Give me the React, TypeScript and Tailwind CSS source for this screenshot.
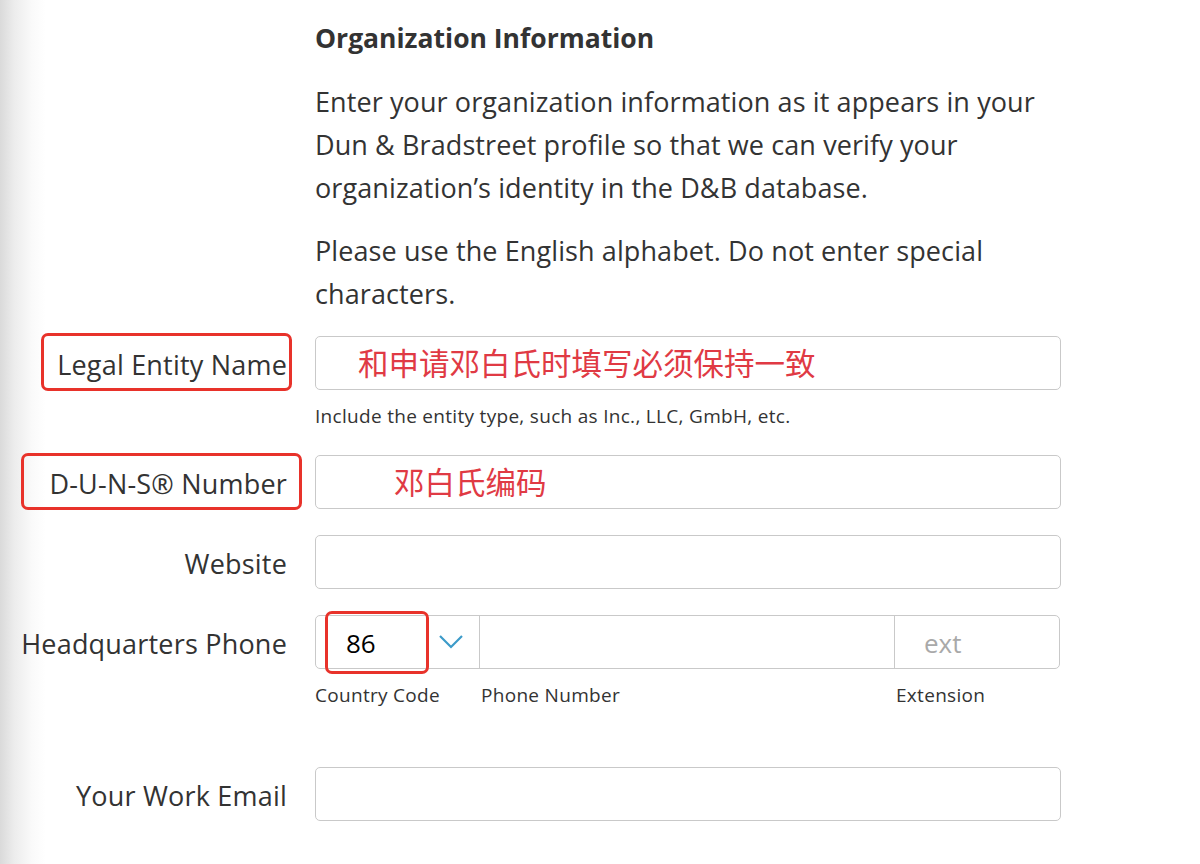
import React from 'react';

const font = { fontFamily: '"Open Sans", "Noto Sans CJK SC", sans-serif' };
const cjk = { fontFamily: '"Noto Sans CJK SC", sans-serif' };

const inputBox = 'h-[54px] w-[746px] rounded-[5px] border border-[#c9c9c9] bg-white';

const Row: React.FC<{ label: string; className?: string; children: React.ReactNode; mark?: React.ReactNode }> = ({ label, className, children, mark }) => (
    <div className={`relative flex items-center ${className || ''}`}>
        {mark}
        <div className="w-[287px] shrink-0 whitespace-nowrap pt-[3px] text-right text-[27px] leading-[30px] tracking-[0.2px] text-[#333]">{label}</div>
        <div className="ml-[28px]">{children}</div>
    </div>
);

export default function App() {
    return (
        <div
            style={font}
            className="min-h-[864px] w-[1200px] bg-[linear-gradient(to_right,#dadada_0px,#ececec_14px,#fafafa_32px,#ffffff_46px)] text-[#333]"
        >
            <div className="pl-[315px] pt-[17px] w-[1061px]">
                <h2 className="text-[26.5px] font-bold leading-[43px] text-[#333]">Organization Information</h2>
                <p className="mt-[20px] w-[740px] text-[27px] leading-[43px] tracking-[0.1px]">
                    Enter your organization information as it appears in your Dun &amp; Bradstreet profile so that we can verify your organization’s identity in the D&amp;B database.
                </p>
                <p className="mt-[20px] w-[740px] text-[27px] leading-[43px] tracking-[0.1px]">
                    Please use the English alphabet. Do not enter special characters.
                </p>
            </div>

            <Row
                label="Legal Entity Name"
                className="mt-[21px]"
                mark={<span className="pointer-events-none absolute left-[41px] top-[-3px] h-[58px] w-[251px] rounded-[7px] border-[3px] border-[#e8322a]" />}
            >
                <div style={cjk} className={`${inputBox} flex items-center pl-[42px] text-[30.5px] text-[#e03a44]`}>和申请邓白氏时填写必须保持一致</div>
            </Row>
            <div className="ml-[315px] mt-[13px] text-[19px] leading-[26px] tracking-[0.3px] text-[#333]">Include the entity type, such as Inc., LLC, GmbH, etc.</div>

            <Row
                label="D-U-N-S® Number"
                className="mt-[26px]"
                mark={<span className="pointer-events-none absolute left-[21px] top-[-2px] h-[57px] w-[281px] rounded-[7px] border-[3px] border-[#e8322a]" />}
            >
                <div style={cjk} className={`${inputBox} flex items-center pl-[78px] text-[30.5px] text-[#e03a44]`}>邓白氏编码</div>
            </Row>

            <Row label="Website" className="mt-[26px]">
                <div className={inputBox} />
            </Row>

            <Row label="Headquarters Phone" className="mt-[26px]">
                <div className="relative">
                    <div className="flex h-[54px] w-[745px] rounded-[5px] border border-[#c9c9c9] bg-white">
                        <div className="flex w-[164px] items-center border-r border-[#c9c9c9]">
                            <span className="ml-[30px] w-[92px] pt-[2px] text-[26px] text-black">86</span>
                            <svg width="26" height="16" viewBox="0 0 26 16" fill="none">
                                <path d="M2 2 L13 13 L24 2" stroke="#3d9bc9" strokeWidth="2.2" />
                            </svg>
                        </div>
                        <div className="w-[415px] border-r border-[#c9c9c9]" />
                        <div className="flex flex-1 items-center pl-[29px] pt-[2px] text-[26px] text-[#a9a9a9]">ext</div>
                    </div>
                    <span className="pointer-events-none absolute left-[10px] top-[-4px] h-[63px] w-[104px] rounded-[7px] border-[3px] border-[#e8322a]" />
                </div>
            </Row>
            <div className="ml-[315px] mt-[13px] flex text-[19px] leading-[26px] tracking-[0.3px] text-[#333]">
                <span className="w-[166px]">Country Code</span>
                <span className="w-[415px]">Phone Number</span>
                <span>Extension</span>
            </div>

            <Row label="Your Work Email" className="mt-[59px]">
                <div className={inputBox} />
            </Row>
        </div>
    );
}
